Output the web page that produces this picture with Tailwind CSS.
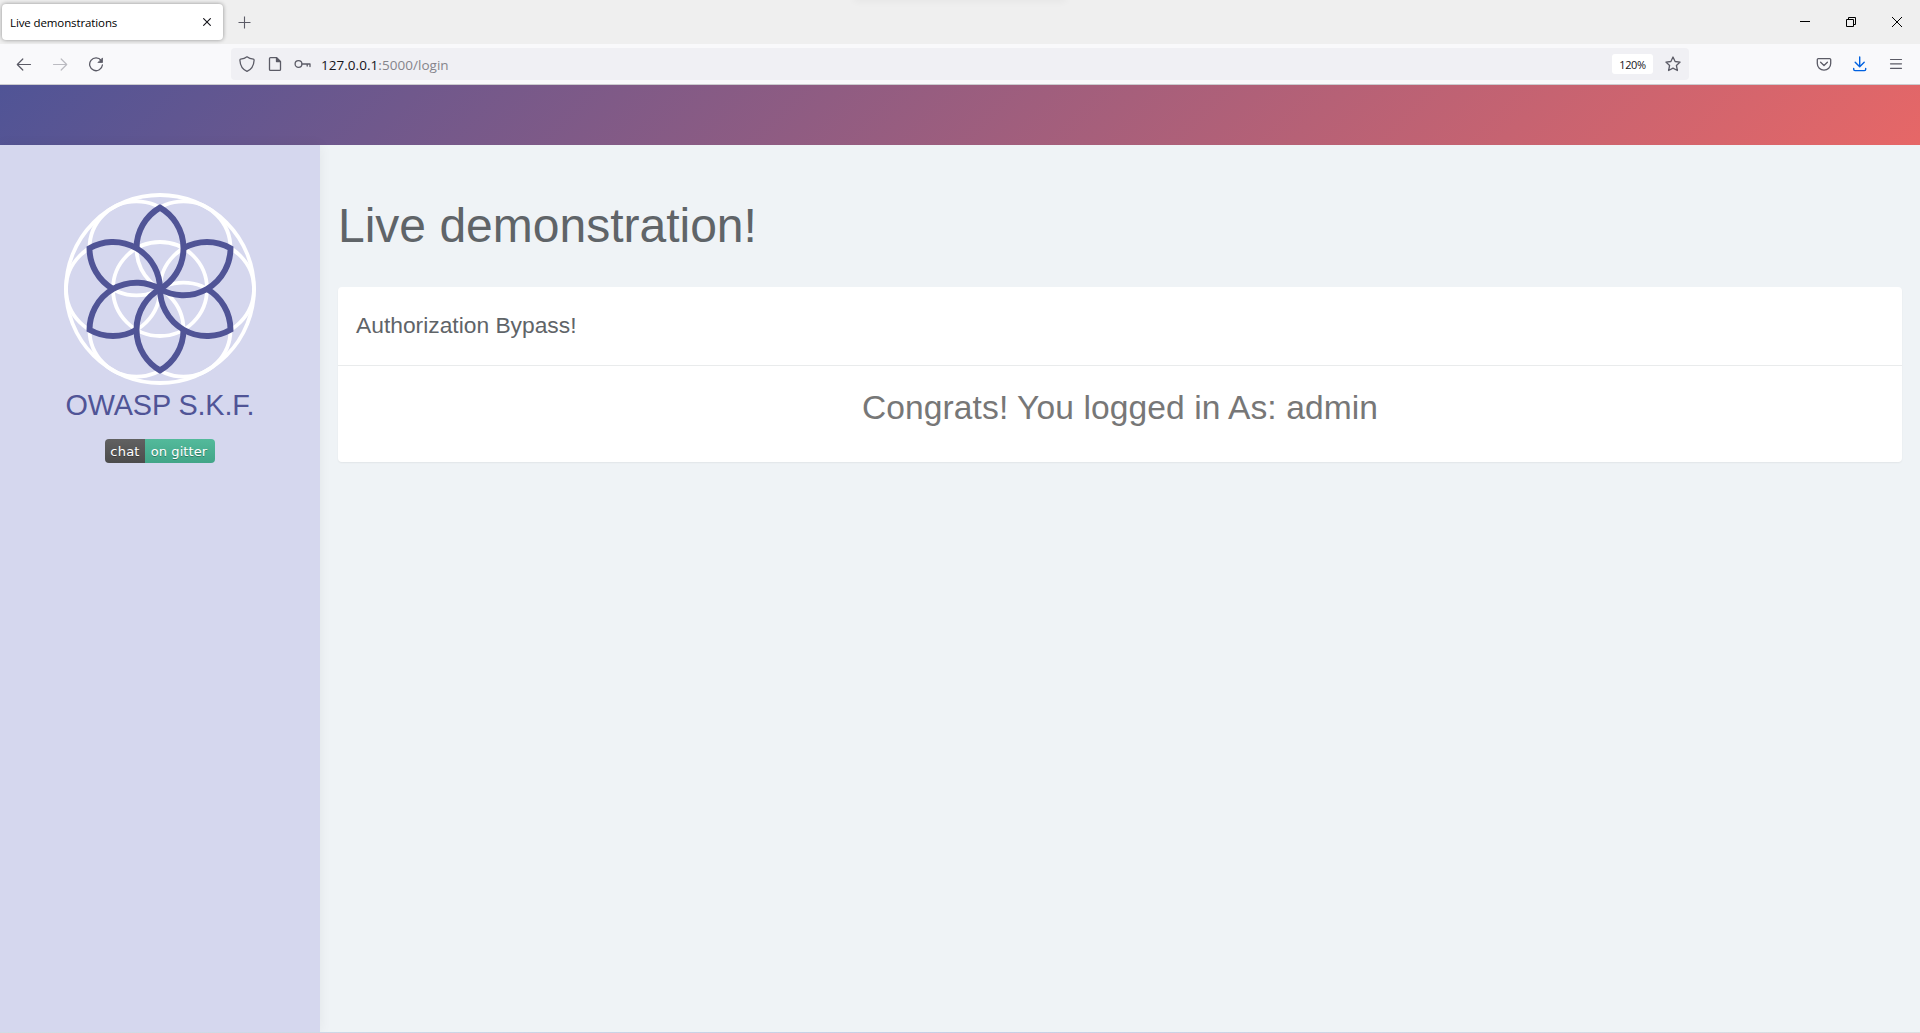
<!DOCTYPE html>
<html lang="en">
<head>
<meta charset="utf-8">
<title>Live demonstrations</title>
<script src="https://cdn.jsdelivr.net/npm/@tailwindcss/browser@4"></script>
</head>
<body class="flex h-[1033px] w-[1920px] flex-col overflow-hidden bg-[#eff3f6] font-['Liberation_Sans',Arial,sans-serif]">
  <!-- Tab strip -->
  <div class="relative flex h-11 shrink-0 items-start bg-[#efefef] font-['Open_Sans',sans-serif]">
    <div class="absolute left-[855px] -top-1 h-[3px] w-[210px] shadow-[0_0_8px_1px_rgba(0,0,0,0.07)]"></div>
    <div class="mt-1 ml-0.5 flex h-9 w-[221px] items-center justify-between rounded bg-white pr-3 pl-2 shadow-[0_0_4px_rgba(0,0,0,0.4)]">
      <span class="pt-px text-[11.5px] tracking-[-0.11px] whitespace-nowrap text-black">Live demonstrations</span>
      <svg class="size-2" viewBox="0 0 8 8" fill="none" stroke="#15141a" stroke-width="1.1"><path d="M.3.3l7.4 7.4M7.700.3L.3 7.700"/></svg>
    </div>
    <svg class="mt-4 ml-[15px] size-[13px]" viewBox="0 0 13 13" fill="none" stroke="#5b5b66" stroke-width="1.1"><path d="M6.5 .5v12M.5 6.5h12"/></svg>
    <div class="mt-[17px] mr-[18px] ml-auto flex">
      <svg class="mr-9 h-[10px] w-[10px]" viewBox="0 0 10 10" fill="#000"><path d="M0 4h10v1H0z"/></svg>
      <svg class="mr-9 h-[10px] w-[10px]" viewBox="0 0 10 10" fill="none" stroke="#000"><path d="M.5 2.5h7v7h-7zM2.5 2.5v-2h7v7h-2"/></svg>
      <svg class="h-[10px] w-[10px]" viewBox="0 0 10 10" fill="none" stroke="#000"><path d="M0 0l10 10M10 0L0 10"/></svg>
    </div>
  </div>
  <!-- Navigation toolbar -->
  <div class="flex h-[41px] shrink-0 items-start border-b border-[#cccccf] bg-[#f9f9fb] font-['Open_Sans',sans-serif]">
    <div class="mt-3 ml-4 flex w-[215px] gap-5">
      <svg class="size-4" viewBox="0 0 16 16" fill="none" stroke="#5b5b66" stroke-width="1.200" stroke-linecap="round" stroke-linejoin="round"><path d="M14.500 8.500h-13M6.800 3L1.300 8.500l5.500 5.500"/></svg>
      <svg class="size-4" viewBox="0 0 16 16" fill="none" stroke="#bbbbc1" stroke-width="1.200" stroke-linecap="round" stroke-linejoin="round"><path d="M1.500 8.500h13M9.200 3l5.500 5.500-5.500 5.500"/></svg>
      <svg class="size-4" viewBox="0 0 16 16" fill="none" stroke="#5b5b66" stroke-width="1.300" stroke-linecap="round"><path d="M13.200 4.500A6.400 6.400 0 1 0 14.400 9"/><path d="M14.500 2.300v4.200h-4.200z" fill="#5b5b66" stroke-width=".8" stroke-linejoin="round"/></svg>
    </div>
    <div class="mt-1 flex h-8 w-[1458px] items-center rounded bg-[#f0f0f4] pr-2 pl-2">
      <svg class="size-4" viewBox="0 0 16 16" fill="none" stroke="#5b5b66" stroke-width="1.300" stroke-linejoin="round"><path d="M8 .8C6.300 2.200 3.900 3 1.600 3.200 1 3.300.9 3.700.9 4.300 1.200 9.500 3.300 13.500 8 15.400c4.700-1.900 6.800-5.900 7.100-11.100 0-.6-.1-1-.7-1.100C12.100 3 9.700 2.200 8 .8z"/></svg>
      <svg class="ml-3 size-4" viewBox="0 0 16 16" fill="none" stroke="#5b5b66" stroke-width="1.300" stroke-linejoin="round"><path d="M3.500 1.600h6l4 4v7.800q0 1-1 1h-9q-1 0-1-1V2.600q0-1 1-1z"/><path d="M9.500 1.600v4h4z" fill="#5b5b66"/></svg>
      <svg class="ml-[11px] h-4 w-[17px]" viewBox="0 0 17 16" fill="none" stroke="#5b5b66" stroke-width="1.300" stroke-linecap="round" stroke-linejoin="round"><circle cx="4.500" cy="8" r="3.400"/><path d="M8 8h8v2.500M13.200 8v2"/></svg>
      <span class="ml-[10px] pt-0.5 text-[13.500px] tracking-[0.040px] whitespace-nowrap text-[#85848b]"><span class="text-[#15141a]">127.0.0.1</span>:5000/login</span>
      <span class="ml-auto flex h-5 w-[41px] items-center justify-center rounded-[3px] bg-white pt-[3px] text-[11px] tracking-[-0.350px] text-[#15141a]">120%</span>
      <svg class="ml-3 size-4" viewBox="0 0 16 16" fill="none" stroke="#5b5b66" stroke-width="1.300" stroke-linejoin="round"><path d="M8 1l2.100 4.500 5 .6-3.700 3.400 1 5L8 12.100l-4.400 2.400 1-5L.9 6.100l5-.6z"/></svg>
    </div>
    <div class="mt-3 mr-4 ml-auto flex gap-5">
      <svg class="size-4" viewBox="0 0 16 16" fill="none" stroke="#5b5b66" stroke-width="1.300" stroke-linecap="round" stroke-linejoin="round"><path d="M2.300 2.600h11.400q1 0 1 1V7.500a6.700 6.700 0 0 1-13.400 0V3.600q0-1 1-1z"/><path d="M4.600 6.300L8 9.500l3.400-3.200"/></svg>
      <svg class="size-4" viewBox="0 0 16 16" fill="none" stroke="#0061e0" stroke-width="1.400" stroke-linecap="round" stroke-linejoin="round"><path d="M7.700 1v9.500M3.200 6.300l4.500 4.500 4.500-4.500M1.700 12.500v.8q0 1.300 1.300 1.300h9.400q1.300 0 1.300-1.300v-.8"/></svg>
      <svg class="size-4" viewBox="0 0 16 16" fill="none" stroke="#5b5b66" stroke-width="1.200" stroke-linecap="round"><path d="M2.500 3.500h11M2.500 7.800h11M2.500 12.300h11"/></svg>
    </div>
  </div>
  <!-- Site header -->
  <header class="h-[60px] shrink-0 bg-[linear-gradient(135deg,#505496_0%,#e66767_100%)]"></header>
  <div class="flex min-h-0 flex-1">
    <aside class="flex w-80 shrink-0 flex-col items-center bg-[#d5d7ee] pt-12 shadow-[0_0_12px_rgba(0,0,0,0.06)]">
      <svg class="size-48 shrink-0" viewBox="-96 -96 192 192" fill="none">
        <g stroke="#fff" stroke-width="3.800">
          <circle r="94"/><circle r="47"/>
          <circle cx="47" r="47"/><circle cx="-47" r="47"/>
          <circle cx="23.500" cy="-40.700" r="47"/><circle cx="-23.500" cy="-40.700" r="47"/>
          <circle cx="23.500" cy="40.700" r="47"/><circle cx="-23.500" cy="40.700" r="47"/>
        </g>
        <g stroke="#505496" stroke-width="5.900" stroke-miterlimit="10">
          <path id="petal" d="M-23.500-40.700A47 47 0 0 1 0-81.400A47 47 0 0 1 0 0"/>
          <use href="#petal" transform="rotate(60)"/><use href="#petal" transform="rotate(120)"/>
          <use href="#petal" transform="rotate(180)"/><use href="#petal" transform="rotate(240)"/>
          <use href="#petal" transform="rotate(300)"/>
        </g>
      </svg>
      <div class="text-[28.800px] leading-10 tracking-[-0.120px] whitespace-nowrap text-[#505496]">OWASP S.K.F.</div>
      <div class="mt-[14px] flex h-6 w-[110px] overflow-hidden rounded font-['DejaVu_Sans',sans-serif] text-[13px] leading-[26px] text-white [text-shadow:0_1px_0_rgba(1,1,1,0.300)]">
        <span class="w-10 bg-linear-to-b from-[#616161] to-[#4c4c4c] text-center tracking-[0.200px]">chat</span>
        <span class="flex-1 bg-linear-to-b from-[#53ba9b] to-[#42a588] pr-0.5 text-center tracking-[0.100px] whitespace-nowrap">on gitter</span>
      </div>
    </aside>
    <main class="flex-1 px-[18px] pt-[52px]">
      <h1 class="text-[48px] leading-[58px] whitespace-nowrap text-[#5f6468]">Live demonstration!</h1>
      <section class="mt-8 h-[175px] rounded bg-white shadow-[0_1px_2px_rgba(0,0,0,0.060)]">
        <h2 class="h-[79px] border-b border-[#e9ebec] pt-[23px] pl-[18px] text-[22.800px] leading-[30px] text-[#5f6468]">Authorization Bypass!</h2>
        <p class="pt-[22px] text-center text-[33.600px] leading-10 tracking-[0.080px] text-[#777]">Congrats! You logged in As: admin</p>
      </section>
    </main>
  </div>
  <div class="h-px shrink-0 bg-linear-to-r from-[#d0dce6] via-[#c5cfe6] to-[#dcdfe2]"></div>
</body>
</html>
